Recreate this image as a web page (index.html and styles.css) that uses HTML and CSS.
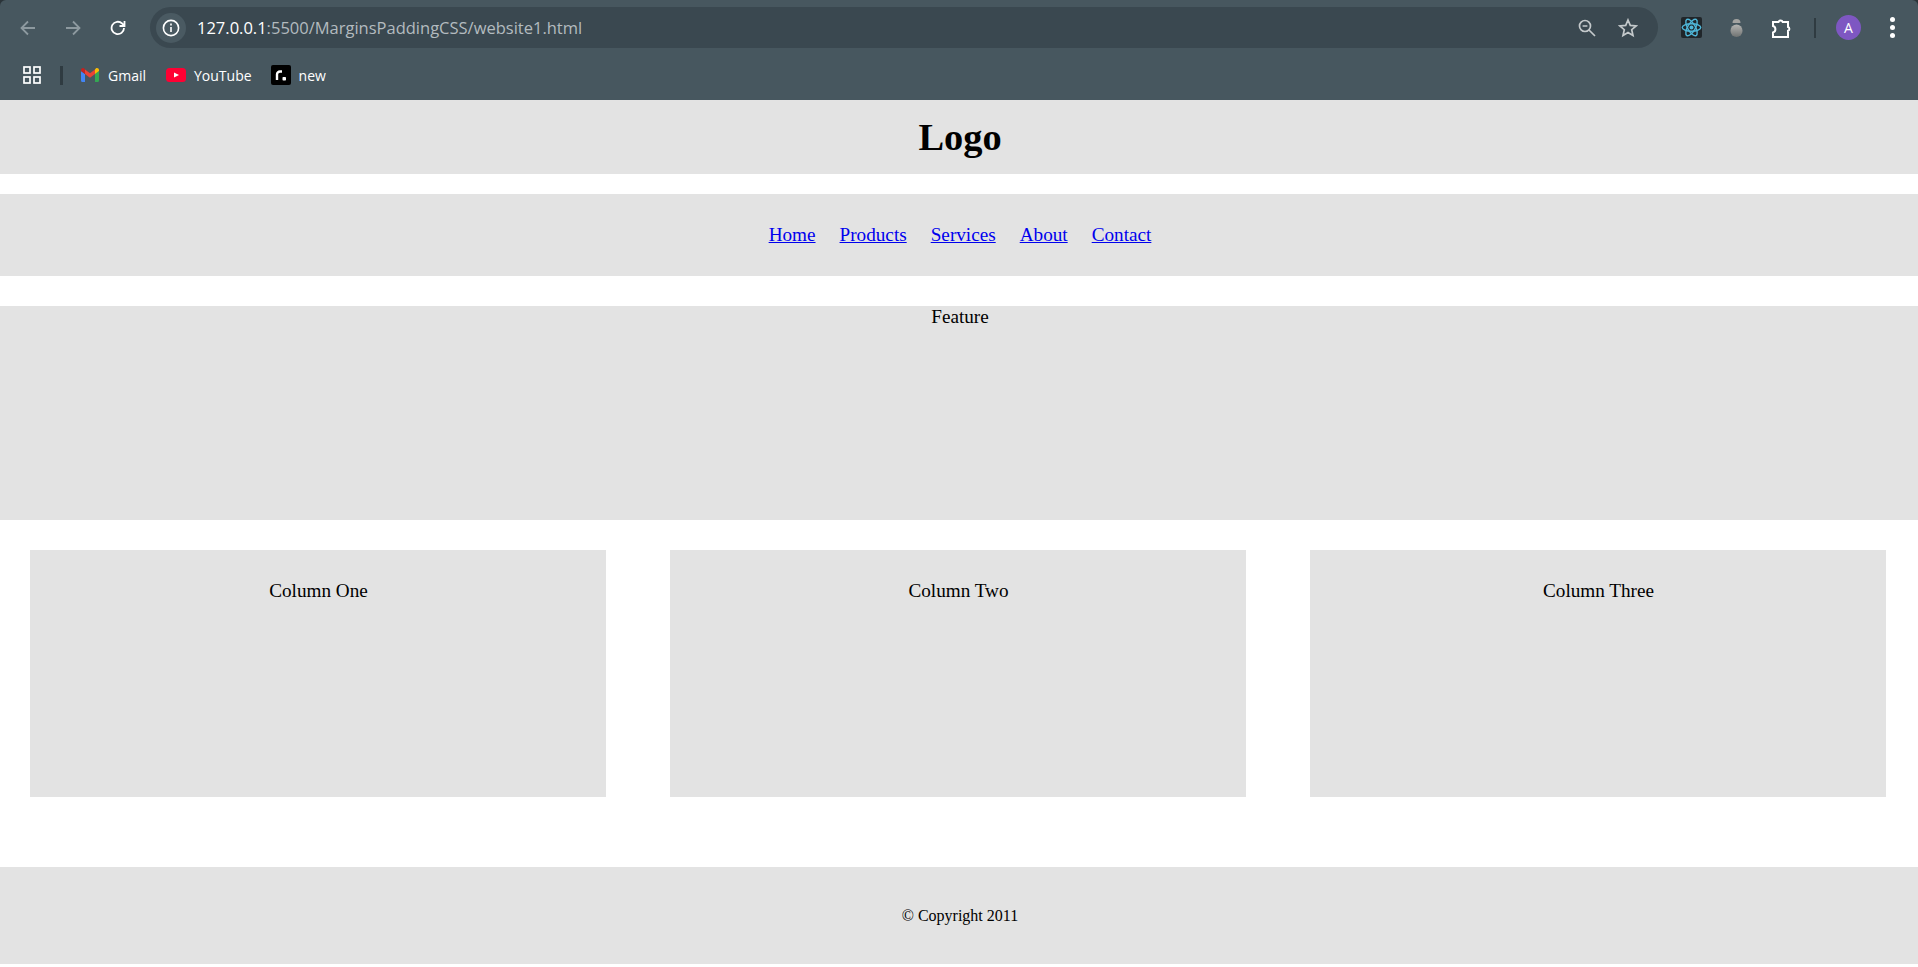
FILE: index.html
```html
<!DOCTYPE html>
<html lang="en">
<head>
  <meta charset="UTF-8">
  <title>Margins and Padding</title>
  <link rel="stylesheet" href="styles.css">
</head>
<body>
  <div class="browser-frame">
    <div class="browser-bar">
      <div class="toolbar">
        <div class="nav-buttons">
          <svg class="icon-16 dim" viewBox="0 0 16 16"><path d="M15 8H1.5M8 1.5L1.5 8 8 14.5"/></svg>
          <svg class="icon-16 dim" viewBox="0 0 16 16"><path d="M1 8h13.5M8 1.5L14.5 8 8 14.5"/></svg>
          <svg class="icon-16 bright" viewBox="0 0 16 16"><path d="M14 8a6.2 6.2 0 1 1-1.9-4.5L14.5 6M14.5 1v5h-5"/></svg>
        </div>
        <div class="omnibox">
          <div class="site-info">
            <svg class="icon-18" viewBox="0 0 18 18"><circle cx="9" cy="9" r="7.6"/><path d="M9 8v5M9 4.6v1.8"/></svg>
          </div>
          <div class="url"><span class="host">127.0.0.1</span>:5500/MarginsPaddingCSS/website1.html</div>
          <svg class="icon-zoom" viewBox="0 0 18 18"><circle cx="7" cy="7" r="5.5"/><path d="M4.6 7h4.8M11 11l6 6"/></svg>
          <svg class="icon-star" viewBox="0 0 20 20"><path d="M10 2l2.3 5.4 5.8.5-4.4 3.8 1.3 5.7-5-3-5 3 1.3-5.7L1.9 7.9l5.8-.5z"/></svg>
        </div>
        <div class="extensions">
          <svg class="ext-react" viewBox="0 0 21 21">
            <rect width="21" height="21" rx="2" fill="#20262a"/>
            <g fill="none" stroke="#4fb6d8" stroke-width="1.4">
              <ellipse cx="10.5" cy="10.5" rx="9.3" ry="3.8"/>
              <ellipse cx="10.5" cy="10.5" rx="9.3" ry="3.8" transform="rotate(60 10.5 10.5)"/>
              <ellipse cx="10.5" cy="10.5" rx="9.3" ry="3.8" transform="rotate(120 10.5 10.5)"/>
            </g>
            <circle cx="10.5" cy="10.5" r="2" fill="#4fb6d8"/>
          </svg>
          <svg class="ext-bug" viewBox="0 0 15 18">
            <defs>
              <linearGradient id="bugFill" x1="0" y1="0" x2="0" y2="1">
                <stop offset="0" stop-color="#b4b4b2"/>
                <stop offset="1" stop-color="#707372"/>
              </linearGradient>
            </defs>
            <path d="M3.500 4a4 4 0 0 1 8 0z" fill="#a3a3a1"/>
            <rect x="1.500" y="5.500" width="12" height="12.500" rx="6" fill="url(#bugFill)"/>
          </svg>
          <svg class="ext-puzzle" viewBox="0 0 22 20"><path d="M2 4h5.500a2.200 2.200 0 0 1 4.200 0H17v5a2 2 0 0 1 0 3.800V19H2v-4.500a3.400 3.400 0 0 0 0-6.500z"/></svg>
          <div class="bar-divider"></div>
          <div class="avatar">A</div>
          <div class="menu-dots"><span></span><span></span><span></span></div>
        </div>
      </div>
      <div class="bookmarks">
        <svg class="apps-icon" viewBox="0 0 18 18">
          <rect x="1" y="1" width="6" height="6"/><rect x="11" y="1" width="6" height="6"/>
          <rect x="1" y="11" width="6" height="6"/><rect x="11" y="11" width="6" height="6"/>
        </svg>
        <div class="bookmark-divider"></div>
        <div class="bookmark bookmark-gmail">
          <svg class="mark-gmail" viewBox="0 0 18 14">
            <path d="M0 3v9.500A1.500 1.500 0 0 0 1.500 14H4V6z" fill="#4285f4"/>
            <path d="M14 6v8h2.500a1.500 1.500 0 0 0 1.500-1.500V3z" fill="#34a853"/>
            <path d="M14 1.500V6l4-3V2c0-1.600-1.900-2.600-3.200-1.600z" fill="#fbbc04"/>
            <path d="M4 6V1.500L9 5.200l5-3.700V6L9 9.800z" fill="#ea4335"/>
            <path d="M0 2v1l4 3V1.500L3.200.4C1.900-.6 0 .4 0 2z" fill="#c5221f"/>
          </svg>
          <span>Gmail</span>
        </div>
        <div class="bookmark bookmark-youtube">
          <svg class="mark-youtube" viewBox="0 0 20 14">
            <rect width="20" height="14" rx="3.500" fill="#ff0033"/>
            <path d="M8 4.500L13 7l-5 2.500z" fill="#fff"/>
          </svg>
          <span>YouTube</span>
        </div>
        <div class="bookmark bookmark-new">
          <svg class="mark-new" viewBox="0 0 20 20">
            <rect width="20" height="20" rx="2" fill="#000"/>
            <path d="M6 15V9.500A3 3 0 0 1 9 6.500h2" fill="none" stroke="#fff" stroke-width="2.400"/>
            <rect x="11.500" y="12" width="3.500" height="3.500" rx=".8" fill="#fff"/>
          </svg>
          <span>new</span>
        </div>
      </div>
    </div>
  </div>

  <header class="site-header">
    <h1>Logo</h1>
  </header>

  <nav class="site-nav">
    <a href="#">Home</a>
    <a href="#">Products</a>
    <a href="#">Services</a>
    <a href="#">About</a>
    <a href="#">Contact</a>
  </nav>

  <section class="feature">Feature</section>

  <main class="columns">
    <div class="column">Column One</div>
    <div class="column">Column Two</div>
    <div class="column">Column Three</div>
  </main>

  <footer class="site-footer">© Copyright 2011</footer>
</body>
</html>
```

FILE: styles.css
```css
html, body {
  margin: 0;
  height: 967px;
  overflow: hidden;
  background: #fff;
}
body {
  font-family: "Liberation Serif", "Times New Roman", serif;
  font-size: 19.2px;
  color: #000;
}

/* browser bar */
.browser-frame {
  background: #2b3439;
}
.browser-bar {
  height: 100px;
  background: #47575f;
  border-radius: 6px 6px 0 0;
  font-family: "Open Sans", "Noto Sans", sans-serif;
  overflow: hidden;
}
.toolbar {
  display: flex;
  align-items: center;
  height: 41px;
  margin-top: 7px;
  padding-left: 20px;
}
.nav-buttons {
  display: flex;
  gap: 29px;
}
svg {
  display: block;
  flex: none;
}
.icon-16 {
  width: 16px;
  height: 16px;
  fill: none;
  stroke-width: 1.8;
}
.dim {
  stroke: #8d999f;
}
.bright {
  stroke: #fff;
}
.omnibox {
  flex: 1;
  display: flex;
  align-items: center;
  height: 41px;
  margin-left: 24px;
  padding-left: 6px;
  background: #3a4850;
  border-radius: 21px;
}
.site-info {
  display: flex;
  align-items: center;
  justify-content: center;
  width: 30px;
  height: 30px;
  background: #4a5a62;
  border-radius: 50%;
}
.icon-18 {
  width: 18px;
  height: 18px;
  fill: none;
  stroke: #fff;
  stroke-width: 1.6;
}
.url {
  flex: 1;
  margin-left: 11px;
  font-size: 16.5px;
  color: #b3bbbf;
  white-space: nowrap;
}
.host {
  color: #fff;
}
.icon-zoom {
  width: 18px;
  height: 18px;
  fill: none;
  stroke: #c4c9cb;
  stroke-width: 1.7;
}
.icon-star {
  width: 20px;
  height: 20px;
  margin-left: 22px;
  margin-right: 20px;
  fill: none;
  stroke: #c4c9cb;
  stroke-width: 1.7;
}
.extensions {
  display: flex;
  align-items: center;
  margin-left: 23px;
  padding-right: 23px;
}
.ext-react {
  width: 21px;
  height: 21px;
}
.ext-bug {
  width: 15px;
  height: 18px;
  margin-left: 27px;
  filter: blur(.4px);
}
.ext-puzzle {
  width: 22px;
  height: 20px;
  margin-left: 27px;
  fill: none;
  stroke: #fff;
  stroke-width: 2;
}
.bar-divider {
  width: 2px;
  height: 20px;
  margin-left: 21px;
  background: #2f3b41;
}
.avatar {
  width: 25px;
  height: 25px;
  margin-left: 20px;
  border-radius: 50%;
  background: #7e57c2;
  color: #fff;
  font-size: 14px;
  line-height: 25px;
  text-align: center;
}
.menu-dots {
  display: flex;
  flex-direction: column;
  gap: 3px;
  margin-left: 29px;
}
.menu-dots span {
  width: 5px;
  height: 5px;
  background: #fff;
  border-radius: 50%;
}

.bookmarks {
  display: flex;
  align-items: center;
  height: 34px;
  margin-top: 10px;
  padding-left: 23px;
  font-size: 14px;
  color: #fff;
}
.apps-icon {
  width: 18px;
  height: 18px;
  fill: none;
  stroke: #fff;
  stroke-width: 1.7;
}
.bookmark-divider {
  width: 3px;
  height: 19px;
  margin-left: 19px;
  background: #2f3b41;
}
.bookmark {
  display: flex;
  align-items: center;
  gap: 8px;
}
.bookmark-gmail {
  gap: 9px;
  margin-left: 18px;
}
.bookmark-youtube {
  margin-left: 20px;
}
.bookmark-new {
  margin-left: 19px;
}
.mark-gmail {
  width: 18px;
  height: 14px;
}
.mark-youtube {
  width: 20px;
  height: 14px;
}
.mark-new {
  width: 20px;
  height: 20px;
}

/* page */
.site-header {
  height: 74px;
  padding-left: 2px;
  background: #e3e3e3;
  text-align: center;
}
.site-header h1 {
  margin: 0;
  padding-top: 15px;
  font-size: 38.4px;
  line-height: 44px;
}
.site-nav {
  display: flex;
  justify-content: center;
  gap: 24px;
  height: 82px;
  margin-top: 20px;
  padding-top: 30px;
  padding-left: 2px;
  box-sizing: border-box;
  background: #e3e3e3;
}
.site-nav a {
  color: #00e;
}
.feature {
  height: 214px;
  margin-top: 30px;
  padding-left: 2px;
  background: #e3e3e3;
  text-align: center;
}
.columns {
  display: grid;
  grid-template-columns: repeat(3, 1fr);
  gap: 64px;
  margin-top: 30px;
  padding: 0 32px 0 30px;
}
.column {
  height: 247px;
  padding-top: 30px;
  padding-left: 1px;
  box-sizing: border-box;
  background: #e3e3e3;
  text-align: center;
}
.site-footer {
  height: 97px;
  margin-top: 70px;
  padding-top: 40px;
  padding-left: 2px;
  box-sizing: border-box;
  background: #e3e3e3;
  font-size: 16px;
  text-align: center;
}
```
